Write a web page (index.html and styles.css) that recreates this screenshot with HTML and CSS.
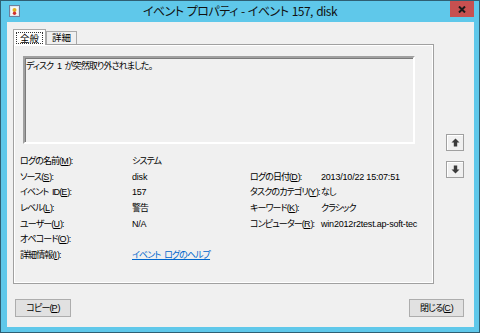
FILE: index.html
```html
<!DOCTYPE html>
<html lang="ja">
<head>
<meta charset="UTF-8">
<title>イベント プロパティ</title>
<link rel="stylesheet" href="styles.css">
</head>
<body>
<div class="win">
    <div class="tb">
        <svg class="ico" width="11" height="12" viewBox="0 0 11 12">
            <rect x="0.5" y="0.5" width="10" height="11" fill="#dfe6f0" stroke="#6d7f9c"/>
            <rect x="2" y="2" width="7" height="8" fill="#f6f6f6"/>
            <circle cx="5.5" cy="5" r="2" fill="#e0b020"/>
            <circle cx="5.5" cy="8.3" r="1.7" fill="#d03030"/>
        </svg>
        <div class="tt">イベント プロパティ - イベント 157, disk</div>
        <div class="cls"><svg width="8" height="7" viewBox="0 0 8 7"><path d="M1 0.5 L7 6.5 M7 0.5 L1 6.5" stroke="#1a1a1a" stroke-width="2"/></svg></div>
    </div>
    <div class="cl">
        <div class="mn">
            <div class="tabs">
                <div class="strip">
                    <div class="tab on"><span class="fc">全般</span></div>
                    <div class="tab">詳細</div>
                </div>
                <div class="pnl">
                    <div class="desc">ディスク 1 が突然取り外されました。</div>
                    <div class="fld">
                        <div>ログの名前(<u>M</u>):</div><div>システム</div><div></div><div></div>
                        <div>ソース(<u>S</u>):</div><div class="lat">disk</div><div>ログの日付(<u>D</u>):</div><div class="lat">2013/10/22 15:07:51</div>
                        <div>イベント ID(<u>E</u>):</div><div class="lat">157</div><div>タスクのカテゴリ(<u>Y</u>):</div><div>なし</div>
                        <div>レベル(<u>L</u>):</div><div>警告</div><div>キーワード(<u>K</u>):</div><div>クラシック</div>
                        <div>ユーザー(<u>U</u>):</div><div class="lat">N/A</div><div>コンピューター(<u>R</u>):</div><div class="lat">win2012r2test.ap-soft-tec</div>
                        <div>オペコード(<u>O</u>):</div><div></div><div></div><div></div>
                        <div>詳細情報(<u>I</u>):</div><div><a href="#">イベント ログのヘルプ</a></div><div></div><div></div>
                    </div>
                </div>
            </div>
            <div class="nav">
                <div class="ab"><svg width="9" height="9" viewBox="0 0 9 9"><path d="M4.5 0.5 L8.5 4.5 H6.2 V8.5 H2.8 V4.5 H0.5 Z" fill="#3a3a3a"/></svg></div>
                <div class="ab"><svg width="9" height="9" viewBox="0 0 9 9"><path d="M4.5 8.5 L8.5 4.5 H6.2 V0.5 H2.8 V4.5 H0.5 Z" fill="#3a3a3a"/></svg></div>
            </div>
        </div>
        <div class="act">
            <div class="btn">コピー(<u>P</u>)</div>
            <div class="btn">閉じる(<u>C</u>)</div>
        </div>
    </div>
</div>
</body>
</html>
```

FILE: styles.css
```css
*{margin:0;padding:0;box-sizing:border-box}
body{width:480px;height:333px;overflow:hidden;font-family:"Liberation Sans","Noto Sans CJK JP",sans-serif;font-size:9px;letter-spacing:-.9px;word-spacing:2px;color:#000;font-feature-settings:"palt"}
u{letter-spacing:0}

/* window frame */
.win{width:480px;height:333px;border:1px solid #2f5f73;background:#5fc8ea;display:flex;flex-direction:column}
.tb{height:21px;display:flex;align-items:flex-start;position:relative}
.ico{margin:4px 0 0 8px}
.tt{position:absolute;left:0;right:0;top:3px;text-align:center;font-family:"Noto Sans CJK JP",sans-serif;font-size:12px;letter-spacing:-.5px;word-spacing:1px;line-height:14px;color:#111}
.cls{margin-left:auto;margin-right:5px;width:24px;height:16px;background:#c75050;display:flex;align-items:center;justify-content:center}

/* client */
.cl{flex:1;margin:0 5px 5px 6px;background:#f0f0f0;padding:7px 10px 0 6px;display:flex;flex-direction:column}
.mn{display:flex}
.tabs{width:422px}
.strip{display:flex;align-items:flex-end;height:15px}
.tab{height:13px;border:1px solid #a9a9a9;border-bottom:none;background:#f0f0f0;line-height:12px;font-size:9.5px;letter-spacing:0;width:31px;text-align:center}
.tab.on{height:16px;width:33px;background:#fff;margin-bottom:-1px;position:relative;z-index:1;padding:2px 2px 0;line-height:11px}
.fc{display:block;border:1px dotted #333;height:12px}
.pnl{height:240px;border:1px solid #a0a0a0;box-shadow:inset 1px 1px #fff,inset -1px -1px #fff;padding-top:11px}
.desc{margin-left:9px;width:392px;height:88px;border:2px solid;border-color:#a0a0a0 #fff #fff #a0a0a0;box-shadow:inset 1px 1px #7a7a7a;padding:1px 0 0 1px;line-height:14px}
.fld{margin:10px 0 0 6px;display:grid;grid-template-columns:112px 118px 71px auto;grid-auto-rows:15.7px;line-height:15.7px;white-space:nowrap}
.fld .lat{letter-spacing:-.2px;word-spacing:0}
.fld a{color:#0066cc}

.nav{margin-left:12px;padding-top:105px;display:flex;flex-direction:column;gap:10px}
.ab{width:18px;height:17px;border:1px solid #a0a0a0;box-shadow:inset 1px 1px #fff;background:#f0f0f0;display:flex;align-items:center;justify-content:center}

.act{display:flex;justify-content:space-between;margin-top:15px;padding-left:2px}
.btn{height:18px;border:1px solid #adadad;background:#e1e1e1;text-align:center;line-height:16px;width:56px}
.btn:last-child{width:55px}
```
